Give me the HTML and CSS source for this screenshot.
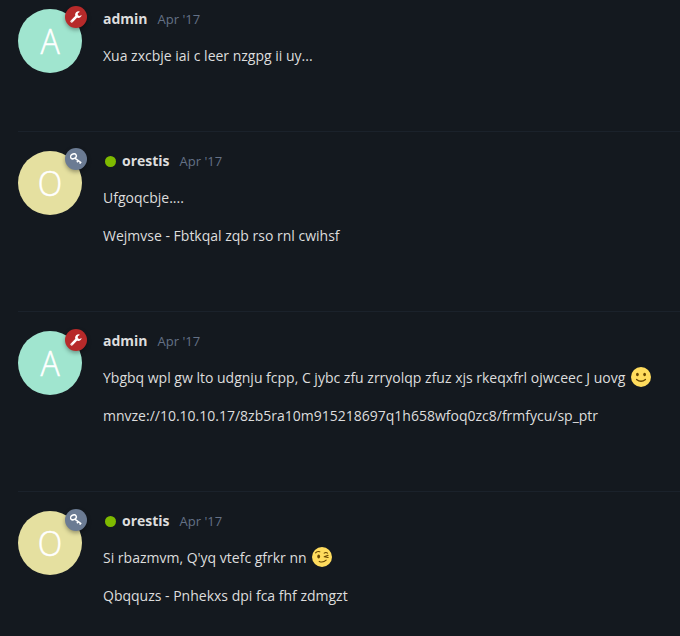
FILE: index.html
```html
<!DOCTYPE html>
<html lang="en">
<head>
<meta charset="utf-8">
<title>Discussion</title>
<link rel="stylesheet" href="styles.css">
</head>
<body>
<svg class="defs" width="0" height="0" aria-hidden="true">
  <symbol id="wrench" viewBox="0 0 12 12">
    <path d="M1.7 10.3 6.3 5.7" fill="none" stroke="#fff" stroke-width="2.6" stroke-linecap="round"/>
    <path d="M10 .7A3.3 3.3 0 1 0 11.7 4L9.6 5 7.8 4.2V2.2Z" fill="#fff"/>
    <circle cx="1.9" cy="10.1" r=".45" fill="#b72a2a"/>
  </symbol>
  <symbol id="key" viewBox="0 0 12 12">
    <ellipse cx="3.4" cy="3.3" rx="3" ry="2.3" transform="rotate(-25 3.4 3.3)" fill="none" stroke="#fff" stroke-width="1.5"/>
    <path d="M4.8 5.1 11.3 9.9M8.2 7.7 6.9 9.2M10.6 9.4 9.7 10.6" fill="none" stroke="#fff" stroke-width="1.5"/>
  </symbol>
</svg>
<main class="stream">
  <article class="post post-first">
    <div class="avatar mint"><span class="letter">A</span><span class="badge red"><svg><use href="#wrench"/></svg></span></div>
    <div class="content">
      <header><b>admin</b><time>Apr '17</time></header>
      <p>Xua zxcbje iai c leer nzgpg ii uy...</p>
    </div>
  </article>
  <article class="post post-second">
    <div class="avatar sand"><span class="letter">O</span><span class="badge slate"><svg><use href="#key"/></svg></span></div>
    <div class="content">
      <header><i class="online"></i><b>orestis</b><time>Apr '17</time></header>
      <p>Ufgoqcbje....</p>
      <p>Wejmvse - Fbtkqal zqb rso rnl cwihsf</p>
    </div>
  </article>
  <article class="post">
    <div class="avatar mint"><span class="letter">A</span><span class="badge red"><svg><use href="#wrench"/></svg></span></div>
    <div class="content">
      <header><b>admin</b><time>Apr '17</time></header>
      <p>Ybgbq wpl gw lto udgnju fcpp, C jybc zfu zrryolqp zfuz xjs rkeqxfrl ojwceec J uovg <svg class="emoji" viewBox="0 0 36 36"><circle cx="18" cy="18" r="18" fill="#ffdc5d"/><g fill="#664500"><ellipse cx="11.5" cy="13.5" rx="2.5" ry="3"/><ellipse cx="24.5" cy="13.5" rx="2.5" ry="3"/></g><path d="M10 22.5Q18 29 26 22.5" fill="none" stroke="#664500" stroke-width="2.4" stroke-linecap="round"/></svg></p>
      <p>mnvze://10.10.10.17/8zb5ra10m915218697q1h658wfoq0zc8/frmfycu/sp_ptr</p>
    </div>
  </article>
  <article class="post post-last">
    <div class="avatar sand"><span class="letter">O</span><span class="badge slate"><svg><use href="#key"/></svg></span></div>
    <div class="content">
      <header><i class="online"></i><b>orestis</b><time>Apr '17</time></header>
      <p>Si rbazmvm, Q'yq vtefc gfrkr nn <svg class="emoji" viewBox="0 0 36 36"><circle cx="18" cy="18" r="18" fill="#ffdc5d"/><ellipse cx="12" cy="17" rx="2.5" ry="3.5" fill="#664500"/><g fill="none" stroke="#664500" stroke-width="2" stroke-linecap="round" stroke-linejoin="round"><path d="M6.5 10.5Q9 7 14 8.5M22 11Q25 9 28 11M29 15 22 17.5 29 19M13 26Q20 29 25.5 23.5"/></g></svg></p>
      <p>Qbqquzs - Pnhekxs dpi fca fhf zdmgzt</p>
    </div>
  </article>
</main>
</body>
</html>
```

FILE: styles.css
```css
* { box-sizing: border-box; }

body {
  margin: 0;
  background: #14191f;
  color: #ddd;
  font: 14px/24px "Open Sans", sans-serif;
}

.defs { position: absolute; }

.stream { padding-left: 18px; }

.post {
  display: flex;
  gap: 21px;
  height: 180px;
  padding-top: 19px;
  border-bottom: 1px solid #1b222b;
}

.post-first {
  height: 132px;
  padding-top: 9px;
}

.post-last {
  height: 144px;
  border-bottom: 0;
}

.avatar {
  position: relative;
  flex: none;
  width: 64px;
  height: 64px;
  border-radius: 50%;
  color: #fff;
  font-size: 34px;
  font-weight: 300;
  line-height: 64px;
  text-align: center;
}

.letter {
  display: block;
  transform: scaleX(.94);
  -webkit-text-stroke: .5px #fff;
}

.mint { background: #a0e5cf; }
.sand { background: #e5e0a0; }

.badge {
  position: absolute;
  top: -2px;
  right: -5px;
  display: flex;
  align-items: center;
  justify-content: center;
  width: 22px;
  height: 22px;
  border-radius: 50%;
  box-shadow: 0 2px 4px rgba(0, 0, 0, .35);
}

.post-first .badge,
.post-second .badge { top: -3px; }

.badge svg { width: 12px; height: 12px; }

.red { background: #b72a2a; }
.slate { background: #6b7b93; }

header {
  display: flex;
  align-items: center;
  height: 20px;
  margin-bottom: 15px;
}

time {
  margin-left: 10px;
  color: #647186;
  font-size: 13px;
}

.online {
  width: 11px;
  height: 11px;
  margin: 1px 6px 0 2px;
  border-radius: 50%;
  background: #7fba00;
}

p {
  height: 24px;
  margin: 0 0 14px;
  white-space: nowrap;
}

p:last-child { margin-bottom: 0; }

.emoji {
  width: 20px;
  height: 20px;
  margin: 0 1px 0 2px;
  vertical-align: -4px;
}
```
